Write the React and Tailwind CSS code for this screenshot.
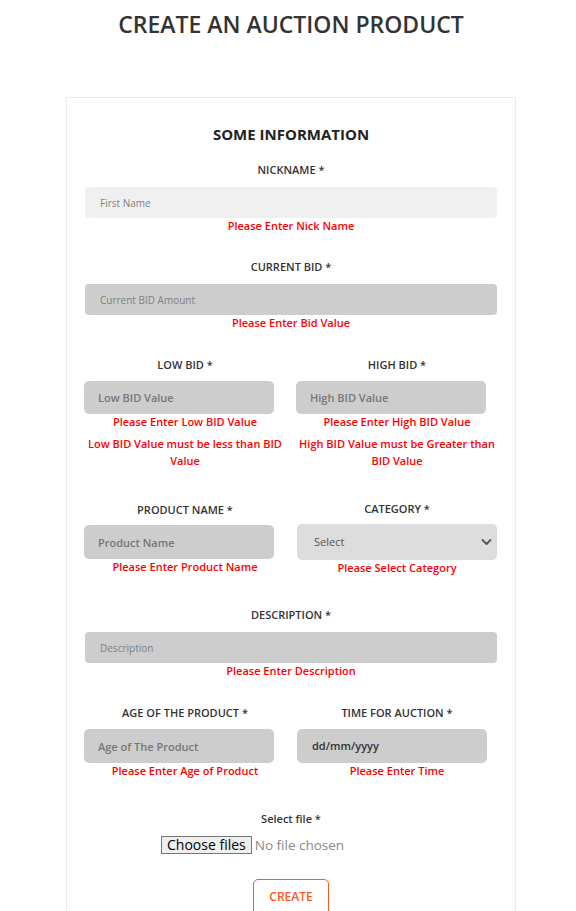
import React from 'react';

function Label({ children, className = '' }) {
  return (
    <div className={`text-center text-[11px] leading-[16px] font-semibold text-[#333] ${className}`}>
      {children}
    </div>
  );
}

function ErrorText({ children, className = '' }) {
  return (
    <div className={`text-center text-[11px] leading-[16px] font-semibold text-[#ff0000] ${className}`}>
      {children}
    </div>
  );
}

function WideInput({ placeholder, light }) {
  return (
    <input
      placeholder={placeholder}
      className={`mt-[9px] block w-full h-[31px] rounded-[4px] pl-[15px] text-[10px] outline-none placeholder:text-[#808080] ${
        light ? 'bg-[#f0f0f0]' : 'bg-[#cdcdcd]'
      }`}
    />
  );
}

function HalfInput({ placeholder, className = '' }) {
  return (
    <input
      placeholder={placeholder}
      className={`block w-[190px] -ml-[1px] rounded-[5px] bg-[#cdcdcd] pl-[14px] text-[11px] font-semibold outline-none placeholder:text-[#777] ${className}`}
    />
  );
}

export default function App() {
  return (
    <div className="min-h-screen bg-white font-['Open_Sans',sans-serif]">
      <div className="w-[450px] ml-[66px]">
        <h1 className="pt-[9px] text-center text-[23px] leading-[30px] font-semibold text-[#333]">
          CREATE AN AUCTION PRODUCT
        </h1>

        <div className="mt-[58px] border border-[#ececec] px-[18px] pb-[40px]">
          <h2 className="pt-[26px] text-center text-[15px] leading-[20px] font-bold text-[#222]">
            SOME INFORMATION
          </h2>

          {/* Nickname */}
          <Label className="mt-[18px]">NICKNAME *</Label>
          <WideInput placeholder="First Name" light />
          <ErrorText>Please Enter Nick Name</ErrorText>

          {/* Current bid */}
          <Label className="mt-[25px]">CURRENT BID *</Label>
          <WideInput placeholder="Current BID Amount" />
          <ErrorText>Please Enter Bid Value</ErrorText>

          {/* Low / High bid */}
          <div className="mt-[26px] grid grid-cols-2 gap-x-[12px]">
            <div>
              <Label>LOW BID *</Label>
              <HalfInput placeholder="Low BID Value" className="mt-[8px] h-[33px]" />
              <ErrorText>Please Enter Low BID Value</ErrorText>
              <ErrorText className="mt-[5px] leading-[17px]">Low BID Value must be less than BID Value</ErrorText>
            </div>
            <div>
              <Label>HIGH BID *</Label>
              <HalfInput placeholder="High BID Value" className="mt-[8px] h-[33px]" />
              <ErrorText>Please Enter High BID Value</ErrorText>
              <ErrorText className="mt-[5px] leading-[17px]">High BID Value must be Greater than BID Value</ErrorText>
            </div>
          </div>

          {/* Product name / category */}
          <div className="mt-[32px] grid grid-cols-2 gap-x-[12px]">
            <div className="pt-[1px]">
              <Label>PRODUCT NAME *</Label>
              <HalfInput placeholder="Product Name" className="mt-[7px] h-[34px]" />
              <ErrorText>Please Enter Product Name</ErrorText>
            </div>
            <div>
              <Label>CATEGORY *</Label>
              <div className="relative mt-[7px]">
                <select className="block w-full h-[36px] appearance-none rounded-[5px] bg-[#dddddd] pl-[17px] text-[11px] text-[#555] outline-none">
                  <option>Select</option>
                </select>
                <svg
                  className="pointer-events-none absolute right-[5px] top-[14px]"
                  width="11"
                  height="8"
                  viewBox="0 0 11 8"
                  fill="none"
                >
                  <path d="M1.5 2L5.5 6L9.5 2" stroke="#555" strokeWidth="1.8" strokeLinecap="round" strokeLinejoin="round" />
                </svg>
              </div>
              <ErrorText>Please Select Category</ErrorText>
            </div>
          </div>

          {/* Description */}
          <Label className="mt-[31px]">DESCRIPTION *</Label>
          <WideInput placeholder="Description" />
          <ErrorText>Please Enter Description</ErrorText>

          {/* Age / time */}
          <div className="mt-[26px] grid grid-cols-2 gap-x-[12px]">
            <div>
              <Label>AGE OF THE PRODUCT *</Label>
              <HalfInput placeholder="Age of The Product" className="mt-[8px] h-[34px]" />
              <ErrorText>Please Enter Age of Product</ErrorText>
            </div>
            <div>
              <Label>TIME FOR AUCTION *</Label>
              <div className="mt-[8px] flex h-[34px] w-[190px] items-center rounded-[5px] bg-[#cdcdcd] pl-[15px] text-[11px] font-semibold text-[#333]">
                dd/mm/yyyy
              </div>
              <ErrorText>Please Enter Time</ErrorText>
            </div>
          </div>

          {/* File */}
          <Label className="mt-[32px]">Select file *</Label>
          <div className="mt-[9px] flex h-[18px] items-center pl-[76px]">
            <span className="flex h-[18px] items-center border border-[#767676] bg-[#efefef] px-[5px] text-[14px] leading-[16px] text-black">
              Choose files
            </span>
            <span className="ml-[3px] text-[13.5px] leading-[16px] text-[#888]">No file chosen</span>
          </div>

          <div className="mt-[25px] flex justify-center">
            <button className="h-[36px] rounded-[5px] border border-[#ff5722] px-[15px] text-[12px] font-semibold text-[#ff5722]">
              CREATE
            </button>
          </div>
        </div>
      </div>
    </div>
  );
}
